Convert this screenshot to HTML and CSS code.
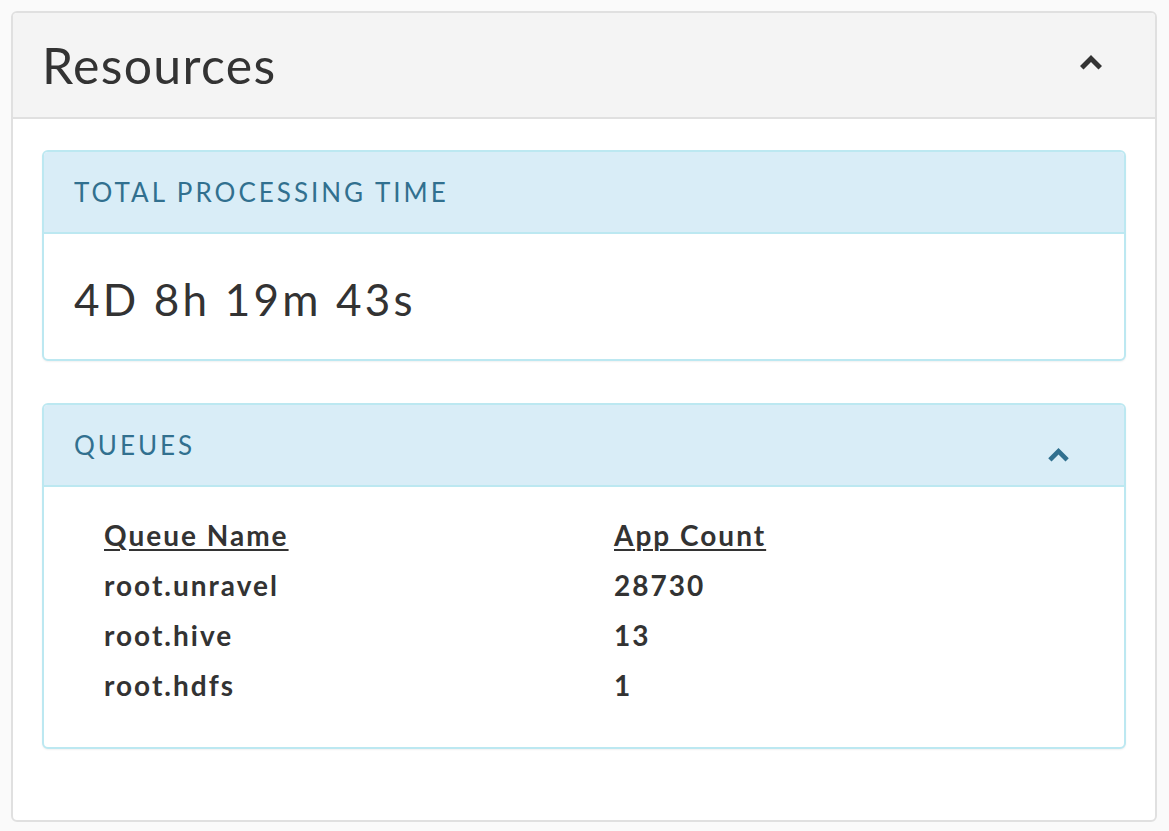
FILE: index.html
```html
<!DOCTYPE html>
<html>
<head>
<meta charset="utf-8">
<link rel="stylesheet" href="styles.css">
</head>
<body>
<div class="panel">
  <div class="panel-header">
    <h3 class="panel-title">Resources</h3>
    <svg class="chev chev-dark" width="22" height="15" viewBox="0 0 22 15"><path d="M11 0 L22 11 L18.5 14.5 L11 7 L3.5 14.5 L0 11 Z"/></svg>
  </div>
  <div class="panel-body">
    <div class="card">
      <div class="card-header">
        <span class="card-title">TOTAL PROCESSING TIME</span>
      </div>
      <div class="card-body value-body">
        <span class="value">4D 8h 19m 43s</span>
      </div>
    </div>
    <div class="card">
      <div class="card-header">
        <span class="card-title">QUEUES</span>
        <svg class="chev chev-blue" width="21" height="14" viewBox="0 0 22 15"><path d="M11 0 L22 11 L18.5 14.5 L11 7 L3.5 14.5 L0 11 Z"/></svg>
      </div>
      <div class="card-body table-body">
        <table class="queues">
          <thead>
            <tr><th class="col-name">Queue Name</th><th>App Count</th></tr>
          </thead>
          <tbody>
            <tr><td>root.unravel</td><td>28730</td></tr>
            <tr><td>root.hive</td><td>13</td></tr>
            <tr><td>root.hdfs</td><td>1</td></tr>
          </tbody>
        </table>
      </div>
    </div>
  </div>
</div>
</body>
</html>
```
FILE: styles.css
```css
html, body {
  margin: 0;
  padding: 0;
}
body {
  background: #fafafa;
  font-family: Lato, "Open Sans", sans-serif;
  color: #333;
  padding: 11px 12px 11px 11px;
}
.panel {
  border: 2px solid #e0e0e0;
  border-radius: 6px;
  background: #fff;
  overflow: hidden;
}
.panel-header {
  height: 104px;
  background: #f4f4f4;
  border-bottom: 2px solid #e0e0e0;
  display: flex;
  align-items: center;
  justify-content: space-between;
  padding: 0 53px 0 29px;
}
.panel-title {
  margin: 0;
  font-size: 50px;
  font-weight: 400;
  color: #333;
  letter-spacing: 1.3px;
}
.chev-dark { fill: #333; margin-top: -5px; }
.chev-blue { fill: #31708f; margin-top: 20px; margin-right: 25px; }
.panel-body {
  padding: 31px 29px 71px 29px;
}
.card {
  border: 2px solid #bce8f1;
  border-radius: 6px;
  background: #fff;
  box-shadow: 0 1px 2px rgba(0,0,0,0.06);
  overflow: hidden;
}
.card + .card {
  margin-top: 42px;
}
.card-header {
  height: 80px;
  background: #d9edf7;
  border-bottom: 2px solid #bce8f1;
  display: flex;
  align-items: center;
  justify-content: space-between;
  padding: 0 30px;
}
.card-title {
  font-size: 26px;
  color: #31708f;
  letter-spacing: 3px;
}
.value-body {
  height: 125px;
  display: flex;
  align-items: center;
  padding: 0 30px;
}
.value {
  font-size: 44px;
  letter-spacing: 3.2px;
  margin-top: 4px;
}
.table-body {
  padding: 23px 58px 37px 60px;
}
.queues {
  border-collapse: collapse;
  font-size: 28px;
  font-weight: 700;
  letter-spacing: 2px;
}
.queues th, .queues td {
  height: 50px;
  padding: 0;
  text-align: left;
  vertical-align: middle;
  font-weight: 700;
}
.queues th {
  text-decoration: underline;
  text-decoration-thickness: 2px;
  text-underline-offset: 3px;
}
.col-name {
  width: 510px;
}
```
